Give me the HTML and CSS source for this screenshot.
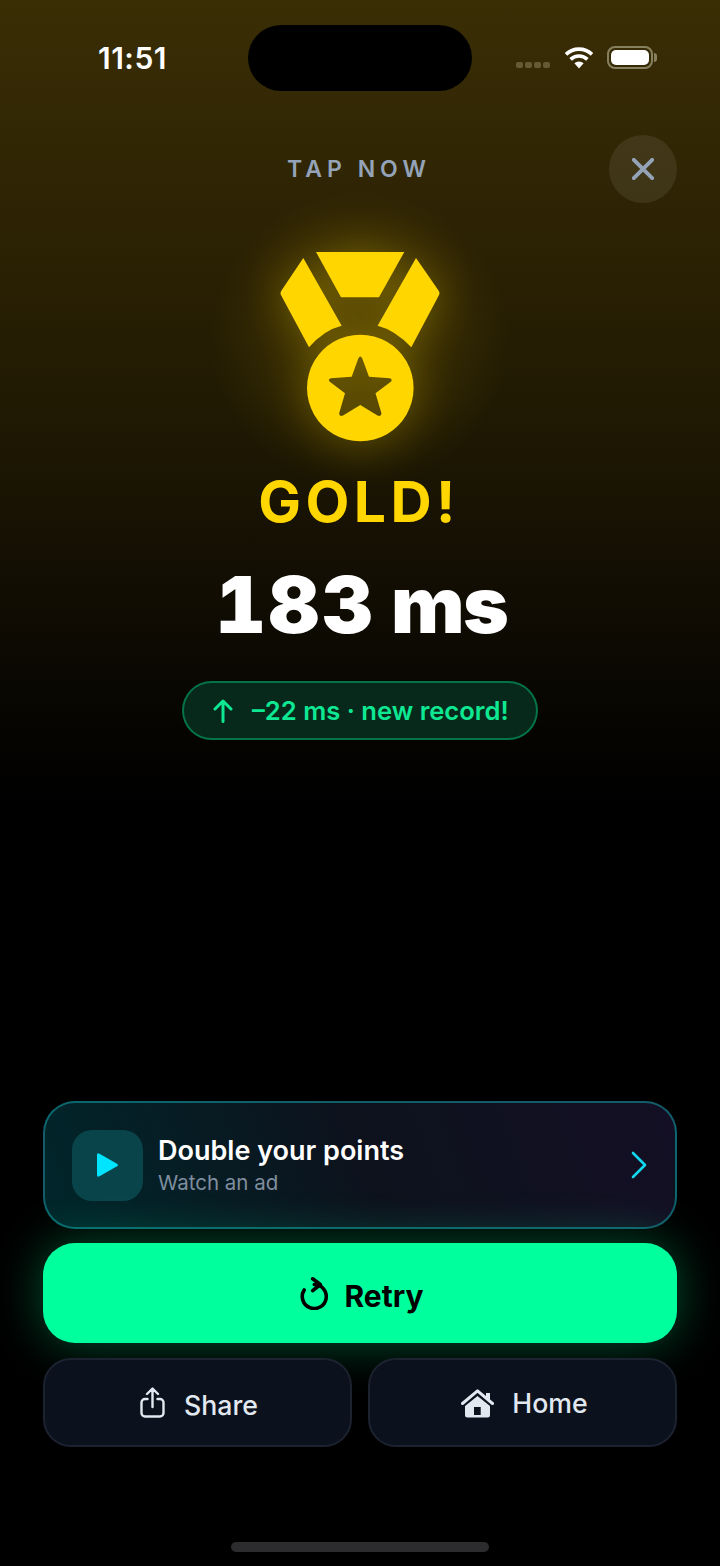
FILE: index.html
```html
<!DOCTYPE html>
<html lang="en">
<head>
<meta charset="utf-8">
<title>Tap Now</title>
<link rel="stylesheet" href="styles.css">
</head>
<body>
<main class="screen">
  <div class="status">
    <span class="time">11:51</span>
    <span class="island"></span>
    <span class="status-icons">
      <span class="cell"><i></i><i></i><i></i><i></i></span>
      <svg class="wifi" viewBox="0 0 30 22"><path d="M15 21.500l-4.600-5.200a6.600 6.600 0 0 1 9.200 0z" fill="#fff"/><path d="M6.600 12.400a12 12 0 0 1 16.800 0M2 7.400a18.600 18.600 0 0 1 26 0" fill="none" stroke="#fff" stroke-width="3.600"/></svg>
      <span class="battery"><span class="battery-fill"></span></span>
    </span>
  </div>

  <header class="top">
    <span class="tap">TAP NOW</span>
    <button class="close" aria-label="Close">
      <svg viewBox="0 0 24 24"><path d="M2 2l20 20M22 2L2 22" fill="none" stroke="#94a3b8" stroke-width="4.200" stroke-linecap="round"/></svg>
    </button>
  </header>

  <section class="hero">
    <svg class="medal" viewBox="0 0 160 192">
      <path fill="#ffd600" d="M36 2H124.300L99 47.300H61z"/>
      <path fill="#ffd600" d="M23.300 8L61.700 75.700Q44 80 29 97.300L1.500 46Q-.5 43.300 1.500 40.500z"/>
      <path fill="#ffd600" d="M136 8L97.600 75.700Q115 80 131.300 97.300L158.500 46Q160.500 43.300 158.500 40.500z"/>
      <path fill="#ffd600" fill-rule="evenodd" d="M80.300 84.700a53.300 53.300 0 1 0 .01 0zM78.300 108.500Q80.300 104.500 82.300 108.500L89 126.700L109.800 128.300Q113 129.500 110.800 131.800L95.500 143.300L101.500 163.500Q101 167 97.500 165.500L80.300 155L63 165.500Q59.500 167 59.100 163.500L65 143.300L49.800 131.800Q47.500 129.500 50.800 128.300L71.700 126.700z"/>
    </svg>
    <h1 class="gold">GOLD!</h1>
    <p class="score"><span class="digits">183</span> <span class="unit">ms</span></p>
    <div class="pill">
      <svg class="pill-arrow" viewBox="0 0 20 24"><path d="M10 22.500V2M2 10l8-8 8 8" fill="none" stroke="#0ee893" stroke-width="3" stroke-linecap="round" stroke-linejoin="round"/></svg>
      <span>–22 ms · new record!</span>
    </div>
  </section>

  <section class="actions">
    <button class="ad">
      <span class="ad-icon"><svg viewBox="0 0 24 26"><path d="M2 3Q2 .5 4.500 1.800L22 11.700Q24 13 22 14.300L4.500 24.200Q2 25.500 2 23z" fill="#00e5ff"/></svg></span>
      <span class="ad-text">
        <span class="ad-title">Double your points</span>
        <span class="ad-sub">Watch an ad</span>
      </span>
      <svg class="chev" viewBox="0 0 16 28"><path d="M2 2l12 12L2 26" fill="none" stroke="#12d8ee" stroke-width="2.600" stroke-linecap="round" stroke-linejoin="round"/></svg>
    </button>
    <button class="retry">
      <svg class="retry-icon" viewBox="0 0 28 33"><path d="M14.300 7.500A12 12 0 1 1 4.200 13" fill="none" stroke="#000" stroke-width="3.600" stroke-linecap="round"/><path d="M12.700 1.800L20.300 7.500l-7.600 6.200" fill="none" stroke="#000" stroke-width="3.600" stroke-linecap="round" stroke-linejoin="round"/></svg>
      <span>Retry</span>
    </button>
    <div class="row">
      <button class="small small-share">
        <svg class="share-icon" viewBox="0 0 25 31"><path d="M7.500 12H5A3.500 3.500 0 0 0 1.500 15.500v10.500A3.500 3.500 0 0 0 5 29.500h15a3.500 3.500 0 0 0 3.500-3.500V15.500A3.500 3.500 0 0 0 20 12h-2.500M12.500 20V2M7 7l5.500-5.500L18 7" fill="none" stroke="#e2e8f0" stroke-width="2.400" stroke-linecap="round" stroke-linejoin="round"/></svg>
        <span>Share</span>
      </button>
      <button class="small small-home">
        <svg class="home-icon" viewBox="0 0 33 29"><path d="M1.500 14.500L16.500 1.800l15 12.700" fill="none" stroke="#e2e8f0" stroke-width="3" stroke-linecap="round" stroke-linejoin="round"/><path fill="#e2e8f0" fill-rule="evenodd" d="M25 4h4v7.500L25 8zM16.500 7L29 17v9a2.500 2.500 0 0 1-2.500 2.500h-20A2.500 2.500 0 0 1 4 26v-9zM13 18v8h6.700v-8z"/></svg>
        <span>Home</span>
      </button>
    </div>
  </section>

  <div class="home-bar"></div>
</main>
</body>
</html>
```

FILE: styles.css
```css
* { box-sizing: border-box; }

html, body {
  margin: 0;
  padding: 0;
  background: #000;
}

.screen {
  position: relative;
  width: 720px;
  height: 1566px;
  overflow: hidden;
  display: flex;
  flex-direction: column;
  font-family: Inter, "Liberation Sans", sans-serif;
  color: #fff;
  background:
    radial-gradient(circle 150px at 360px 340px, rgba(255, 214, 0, .16), rgba(255, 214, 0, 0) 100%),
    linear-gradient(180deg, #3a2e05 0, #2d2304 220px, #211a03 400px, #120e03 580px, #000 800px);
}

/* status bar */
.status {
  display: flex;
  align-items: center;
  height: 66px;
  margin-top: 25px;
  padding: 0 67px 0 98px;
}

.time {
  width: 150px;
  margin-top: -1px;
  font-size: 30px;
  font-weight: 600;
  letter-spacing: .5px;
}

.island {
  width: 224px;
  height: 66px;
  border-radius: 33px;
  background: #000;
}

.status-icons {
  display: flex;
  align-items: center;
  margin-left: auto;
  margin-top: -2px;
}

.cell {
  display: flex;
  gap: 2px;
  margin-top: 16px;
}

.cell i {
  width: 7px;
  height: 6px;
  border-radius: 2px;
  background: #655a33;
}

.wifi {
  width: 30px;
  height: 22px;
  margin: 1px 0 0 14px;
}

.battery {
  position: relative;
  display: flex;
  align-items: center;
  justify-content: center;
  width: 46px;
  height: 23px;
  margin-left: 13px;
  border: 2px solid #87805f;
  border-radius: 8px;
}

.battery::after {
  content: "";
  position: absolute;
  right: -6px;
  top: 5px;
  width: 3px;
  height: 9px;
  border-radius: 0 3px 3px 0;
  background: #87805f;
}

.battery-fill {
  width: 38px;
  height: 15px;
  border-radius: 5px;
  background: #fff;
}

/* header */
.top {
  position: relative;
  display: flex;
  justify-content: center;
  margin-top: 44px;
  height: 68px;
}

.tap {
  margin: 20px 0 0 -2px;
  font-size: 23px;
  font-weight: 600;
  line-height: 28px;
  letter-spacing: 5px;
  color: #94a3b8;
}

.close {
  position: absolute;
  right: 43px;
  top: 0;
  display: flex;
  align-items: center;
  justify-content: center;
  width: 68px;
  height: 68px;
  padding: 0;
  border: 0;
  border-radius: 50%;
  background: rgba(255, 255, 255, .08);
}

.close svg {
  width: 22px;
  height: 22px;
}

/* hero */
.hero {
  display: flex;
  flex-direction: column;
  align-items: center;
}

.medal {
  width: 160px;
  height: 192px;
  margin-top: 47px;
  overflow: visible;
  filter: drop-shadow(0 0 22px rgba(255, 214, 0, .32));
}

.gold {
  margin: 26px 0 0 -2px;
  font-size: 57px;
  font-weight: 700;
  line-height: 68px;
  letter-spacing: 4.400px;
  color: #ffd600;
}

.score {
  margin: 27px 0 0;
  padding-left: 3px;
  font-size: 78px;
  font-weight: 900;
  line-height: 84px;
}

.digits {
  font-variant-numeric: tabular-nums;
  letter-spacing: 3px;
}

.unit {
  letter-spacing: -1.500px;
}

.pill {
  display: flex;
  align-items: center;
  gap: 19px;
  width: 356px;
  height: 59px;
  margin-top: 34px;
  padding-left: 29px;
  border: 2px solid rgba(0, 229, 143, .4);
  border-radius: 30px;
  background: #06291c;
  color: #0ee893;
  font-size: 25.600px;
  font-weight: 600;
}

.pill-arrow {
  width: 20px;
  height: 24px;
}

/* actions */
.actions {
  display: flex;
  flex-direction: column;
  gap: 15px;
  margin-top: auto;
  padding: 0 43px;
}

button {
  font-family: inherit;
  color: inherit;
}

.ad {
  display: flex;
  align-items: center;
  height: 128px;
  margin-bottom: -1px;
  padding: 0 28px 0 27px;
  border: 2px solid rgba(20, 170, 180, .5);
  border-radius: 32px;
  text-align: left;
  background: linear-gradient(70deg, rgba(0, 229, 255, .17), rgba(14, 20, 32, .9) 50%, #140f24);
}

.ad-icon {
  display: flex;
  align-items: center;
  justify-content: center;
  width: 71px;
  height: 71px;
  border-radius: 20px;
  background: #0a444b;
}

.ad-icon svg {
  width: 24px;
  height: 26px;
  margin-left: -2px;
}

.ad-text {
  display: flex;
  flex-direction: column;
  flex: 1;
  margin: -1px 0 0 15px;
}

.ad-title {
  font-size: 27px;
  font-weight: 600;
  line-height: 36px;
}

.ad-sub {
  font-size: 20.500px;
  line-height: 27px;
  color: #7f8e9e;
}

.chev {
  width: 16px;
  height: 28px;
}

.retry {
  display: flex;
  align-items: center;
  justify-content: center;
  gap: 17px;
  height: 100px;
  padding: 5px 0 0 3px;
  border: 0;
  border-radius: 32px;
  background: #00ff9d;
  color: #000;
  font-size: 30px;
  font-weight: 700;
  box-shadow: 0 0 48px rgba(0, 255, 157, .32);
}

.retry-icon {
  width: 28px;
  height: 33px;
  margin-top: -4px;
}

.row {
  display: grid;
  grid-template-columns: 1fr 1fr;
  gap: 16px;
}

.small {
  display: flex;
  align-items: center;
  justify-content: center;
  height: 89px;
  border: 2px solid #1c2230;
  border-radius: 28px;
  background: #0b111d;
  color: #e2e8f0;
  font-size: 26.700px;
  font-weight: 500;
}

.small-share {
  gap: 19px;
  padding: 4px 0 0 3px;
}

.small-home {
  gap: 18px;
  padding: 4px 0 0 4px;
}

.share-icon {
  width: 25px;
  height: 31px;
  margin-top: -4px;
}

.home-icon {
  width: 33px;
  height: 29px;
  margin-top: -3px;
}

.small-home span {
  margin-top: -4px;
}

.home-bar {
  align-self: center;
  width: 258px;
  height: 10px;
  margin: 95px 0 14px;
  border-radius: 5px;
  background: #2c2c2e;
}
```
